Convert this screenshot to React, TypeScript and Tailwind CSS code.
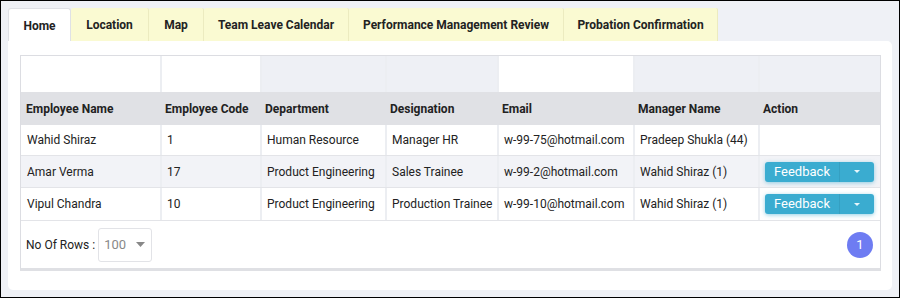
import React from "react";

const tabs = ["Home", "Location", "Map", "Team Leave Calendar", "Performance Management Review", "Probation Confirmation"];
const tabW = ["w-[63px]", "w-[78px]", "w-[55px]", "w-[145px]", "w-[215px]", "w-[154px]"];

const cols = [
  { h: "Employee Name", w: "w-[139px]", filter: "bg-white" },
  { h: "Employee Code", w: "w-[100px]", filter: "bg-white" },
  { h: "Department", w: "w-[125px]", filter: "bg-[#eef0f5]" },
  { h: "Designation", w: "w-[112px]", filter: "bg-[#eef0f5]" },
  { h: "Email", w: "w-[136px]", filter: "bg-white" },
  { h: "Manager Name", w: "w-[125px]", filter: "bg-[#eef0f5]" },
  { h: "Action", w: "w-[122px]", filter: "bg-[#eef0f5]" },
];

const rows = [
  { d: ["Wahid Shiraz", "1", "Human Resource", "Manager HR", "w-99-75@hotmail.com", "Pradeep Shukla (44)"], btn: false, bg: "bg-white", h: "h-[31px]" },
  { d: ["Amar Verma", "17", "Product Engineering", "Sales Trainee", "w-99-2@hotmail.com", "Wahid Shiraz (1)"], btn: true, bg: "bg-[#f2f3f7]", h: "h-[32px]" },
  { d: ["Vipul Chandra", "10", "Product Engineering", "Production Trainee", "w-99-10@hotmail.com", "Wahid Shiraz (1)"], btn: true, bg: "bg-white", h: "h-[33px]" },
];

function FeedbackBtn() {
  return (
    <div className="flex h-[20px] w-[109px] shrink-0 rounded-[3px] bg-[#3aacd0] text-white shadow-[0_1px_4px_rgba(58,172,208,0.55)]">
      <div className="flex w-[75px] items-center justify-center text-[13px] border-r border-[#35a0c2]">Feedback</div>
      <div className="flex flex-1 items-center justify-center">
        <svg width="8" height="5" viewBox="0 0 8 5"><path d="M1 1 L4 4 L7 1 Z" fill="#e8f6fb" /></svg>
      </div>
    </div>
  );
}

export default function App() {
  return (
    <div className="w-[900px] h-[298px] border border-black bg-[#eff1f6] pl-[7px] pr-[7px] pt-[7px] whitespace-nowrap" style={{ fontFamily: "Roboto, 'Liberation Sans', sans-serif" }}>
      <div className="flex h-[33px] items-stretch">
        {tabs.map((t, i) => (
          <div
            key={t}
            className={`${tabW[i]} shrink-0 flex items-center justify-center pt-[1px] text-[12px] font-bold text-[#222] ${
              i === 0
                ? "bg-white border border-b-0 border-[#dfe1e6] rounded-t-[3px]"
                : "bg-[#fafad2] border-r border-[#ecebc0] rounded-t-[2px]"
            }`}
          >
            {t}
          </div>
        ))}
      </div>
      <div className="w-[884px] h-[249px] bg-white rounded-b-[5px] rounded-tr-[5px] pl-[12px] pt-[14px]">
        <div className="w-[861px] border border-[#dcdde2] border-b-[3px] border-b-[#dfe0e4]">
          <div className="flex h-[36px]">
            {cols.map((c, i) => (
              <div key={i} className={`${c.w} shrink-0 ${c.filter} ${i > 0 ? "border-l-[2px] border-[#eceef2]" : ""}`} />
            ))}
          </div>
          <div className="flex h-[33px] bg-[#e0e1e5]">
            {cols.map((c, i) => (
              <div key={i} className={`${c.w} shrink-0 flex items-center pl-[5px] text-[12px] font-bold text-[#222]`}>
                {c.h}
              </div>
            ))}
          </div>
          {rows.map((r, ri) => (
            <div key={ri} className={`flex ${r.h} ${r.bg} border-b border-[#e3e4e8]`}>
              {cols.map((c, i) => (
                <div key={i} className={`${c.w} shrink-0 flex items-center ${i > 0 ? "border-l-[2px] border-[#eceef2] pl-[5px]" : "pl-[6px]"} text-[12px] text-[#222]`}>
                  {i < 6 ? r.d[i] : r.btn ? <FeedbackBtn /> : null}
                </div>
              ))}
            </div>
          ))}
          <div className="flex h-[47px] items-center justify-between pl-[5px] pr-[7px]">
            <div className="flex items-center gap-[3px] text-[12px] text-[#222]">
              <span>No Of Rows :</span>
              <div className="flex h-[34px] w-[54px] items-center justify-between rounded-[3px] border border-[#e2e3e7] pl-[5px] pr-[6px] text-[13px] text-[#888]">
                <span>100</span>
                <svg width="9" height="5" viewBox="0 0 9 5"><path d="M0 0 L9 0 L4.5 5 Z" fill="#888" /></svg>
              </div>
            </div>
            <div className="flex h-[26px] w-[26px] items-center justify-center rounded-full bg-[#6e7cf2] text-[13px] text-white">1</div>
          </div>
        </div>
      </div>
    </div>
  );
}
